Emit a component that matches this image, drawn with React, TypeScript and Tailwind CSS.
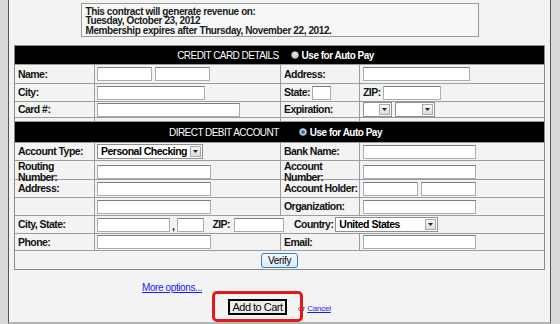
import type { ReactNode } from "react";

const line = "border-[#9c9c9c]";
const label = "text-[10.5px] font-bold tracking-[-0.55px] leading-[11px] text-[#111]";
const grid = `grid grid-cols-[80px_186px_79px_184px] border-b ${line}`;

function Cell({ children, last, className = "" }: { children?: ReactNode; last?: boolean; className?: string }) {
  return (
    <div className={`flex items-center ${last ? "" : `border-r ${line}`} ${className}`}>{children}</div>
  );
}

function Field({ w, className = "" }: { w: number; className?: string }) {
  return (
    <span
      className={`block h-[14px] shrink-0 border border-[#a7adb5] border-t-[#7d7d7d] bg-white ${className}`}
      style={{ width: w }}
    />
  );
}

function Select({ w, text, className = "" }: { w: number; text?: string; className?: string }) {
  return (
    <span
      className={`flex h-[15px] shrink-0 items-center justify-between border border-[#8f8f8f] bg-white pl-[3px] pr-[1px] ${className}`}
      style={{ width: w }}
    >
      <span className="text-[10.5px] font-bold tracking-[-0.5px] leading-[11px]">{text}</span>
      <span className="flex h-[11px] w-[11px] items-center justify-center border border-[#a9a9a9] bg-gradient-to-b from-[#f6f6f6] to-[#dcdcdc]">
        <svg width="5" height="3" viewBox="0 0 5 3">
          <path d="M0 0h5L2.5 3z" fill="#222" />
        </svg>
      </span>
    </span>
  );
}

function Radio({ on }: { on?: boolean }) {
  return (
    <span className="flex h-[8px] w-[8px] shrink-0 items-center justify-center rounded-full border border-[#9a9a9a] bg-gradient-to-b from-[#ececec] to-[#cfcfcf]">
      {on && <span className="h-[4px] w-[4px] rounded-full bg-[#2f6fbf]" />}
    </span>
  );
}

function Header({ title, on, gap, h }: { title: string; on?: boolean; gap: string; h: string }) {
  return (
    <div className={`flex ${h} items-center justify-center border-b ${line} bg-black pr-[8px] text-white`}>
      <span className="text-[10px] tracking-[-0.55px] leading-[11px]">{title}</span>
      <span className={`flex items-center ${gap}`}>
        <Radio on={on} />
        <span className="ml-[3px] text-[10px] font-bold tracking-[-0.5px] leading-[11px]">Use for Auto Pay</span>
      </span>
    </div>
  );
}

export default function App() {
  return (
    <div className="flex h-[324px] w-[560px] bg-[#dadada] font-['Liberation_Sans',Arial,sans-serif] text-black">
      <div className="w-[8px] shrink-0" />
      <div className="h-[324px] w-[543px] shrink-0 border-x border-b-2 border-x-[#555] border-b-[#b5b5b5] bg-[#f3f3f3]">
        <div className="mx-auto mt-[3px] h-[34px] w-[398px] border border-[#9a9a9a] bg-[#f7f7f7] pl-[4px] pt-[3px] text-[10px] font-bold tracking-[-0.4px] leading-[9px] text-[#1a1a1a]">
          <div>This contract will generate revenue on:</div>
          <div>Tuesday, October 23, 2012</div>
          <div className="mt-[1px]">Membership expires after Thursday, November 22, 2012.</div>
        </div>

        <div className={`ml-[5px] mt-[8px] w-[531px] border border-[#8a8a8a]`}>
          <Header title="CREDIT CARD DETAILS" gap="ml-[12px]" h="h-[19px]" />
          <div className={`${grid} h-[19px]`}>
            <Cell className="pl-[3px]"><span className={label}>Name:</span></Cell>
            <Cell className="gap-[3px] pl-[2px]"><Field w={55} /><Field w={55} /></Cell>
            <Cell className="pl-[3px]"><span className={label}>Address:</span></Cell>
            <Cell last className="pl-[3px]"><Field w={107} /></Cell>
          </div>
          <div className={`${grid} h-[18px]`}>
            <Cell className="pl-[3px]"><span className={label}>City:</span></Cell>
            <Cell className="pl-[2px]"><Field w={108} /></Cell>
            <Cell className="pl-[3px]"><span className={label}>State:</span><Field w={19} className="ml-[2px]" /></Cell>
            <Cell last className="pl-[3px]"><span className={label}>ZIP:</span><Field w={58} className="ml-[2px]" /></Cell>
          </div>
          <div className={`${grid} h-[16px]`}>
            <Cell className="pl-[3px]"><span className={label}>Card #:</span></Cell>
            <Cell className="pl-[2px]"><Field w={143} /></Cell>
            <Cell className="pl-[3px]"><span className={label}>Expiration:</span></Cell>
            <Cell last className="gap-[3px] pl-[3px]"><Select w={29} /><Select w={40} /></Cell>
          </div>
          <div className={`${grid} h-[4px]`}>
            <Cell /><Cell /><Cell /><Cell last />
          </div>

          <Header title="DIRECT DEBIT ACCOUNT" on gap="ml-[20px]" h="h-[21px]" />
          <div className={`${grid} h-[18px]`}>
            <Cell className="pl-[3px]"><span className={label}>Account Type:</span></Cell>
            <Cell className="pl-[2px]"><Select w={106} text="Personal Checking" /></Cell>
            <Cell className="pl-[3px]"><span className={label}>Bank Name:</span></Cell>
            <Cell last className="pl-[3px]"><Field w={113} /></Cell>
          </div>
          <div className={`${grid} h-[19px]`}>
            <Cell className="pl-[3px]"><span className={`${label} leading-[8px]`}>Routing<br />Number:</span></Cell>
            <Cell className="pl-[2px]"><Field w={114} /></Cell>
            <Cell className="pl-[3px]"><span className={`${label} leading-[8px]`}>Account<br />Number:</span></Cell>
            <Cell last className="pl-[3px]"><Field w={113} /></Cell>
          </div>
          <div className={`${grid} h-[18px]`}>
            <Cell className="pl-[3px]"><span className={label}>Address:</span></Cell>
            <Cell className="pl-[2px]"><Field w={114} /></Cell>
            <Cell className="pl-[3px]"><span className={label}>Account Holder:</span></Cell>
            <Cell last className="gap-[3px] pl-[3px]"><Field w={55} /><Field w={55} /></Cell>
          </div>
          <div className={`${grid} h-[18px]`}>
            <Cell />
            <Cell className="pl-[2px]"><Field w={114} /></Cell>
            <Cell className="pl-[3px]"><span className={label}>Organization:</span></Cell>
            <Cell last className="pl-[3px]"><Field w={113} /></Cell>
          </div>
          <div className={`${grid} h-[18px]`}>
            <Cell className="pl-[3px]"><span className={label}>City, State:</span></Cell>
            <Cell last className="col-span-3 pl-[2px]">
              <Field w={73} />
              <span className={`${label} ml-[2px] mt-[3px]`}>,</span>
              <Field w={27} className="ml-[3px]" />
              <span className={`${label} ml-[8px]`}>ZIP:</span>
              <Field w={50} className="ml-[4px]" />
              <span className={`${label} ml-[10px]`}>Country:</span>
              <Select w={103} text="United States" className="ml-[2px]" />
            </Cell>
          </div>
          <div className={`${grid} h-[17px]`}>
            <Cell className="pl-[3px]"><span className={label}>Phone:</span></Cell>
            <Cell className="pl-[2px]"><Field w={114} /></Cell>
            <Cell className="pl-[3px]"><span className={label}>Email:</span></Cell>
            <Cell last className="pl-[3px]"><Field w={113} /></Cell>
          </div>
          <div className="flex h-[18px] items-center justify-center">
            <button className="h-[15px] w-[37px] rounded-[3px] border border-[#3c7fb1] bg-gradient-to-b from-[#f5fafe] to-[#d9ebf8] text-[10px] tracking-[-0.3px] leading-[11px]">
              Verify
            </button>
          </div>
        </div>

        <div className="ml-[133px] mt-[12px] text-[10px] tracking-[-0.4px] leading-[12px] text-[#1a1aff] underline">
          More options...
        </div>
        <div className="ml-[219px] mt-[5px] flex items-end">
          <div className="relative flex">
            <button className="h-[16px] w-[59px] border-2 border-black bg-[#ededed] text-[11px] tracking-[-0.5px] leading-[11px]">
              Add to Cart
            </button>
            <span className="absolute left-[-16px] top-[-8px] h-[31px] w-[91px] rounded-[5px] border-[3px] border-[#e21a1a]" />
          </div>
          <span className="ml-[11px] mb-[2px] text-[8px] leading-[9px] text-[#333]">or</span>
          <span className="ml-[2px] mb-[2px] text-[8px] tracking-[-0.2px] leading-[9px] text-[#1a1aff] underline">Cancel</span>
        </div>
      </div>
    </div>
  );
}
